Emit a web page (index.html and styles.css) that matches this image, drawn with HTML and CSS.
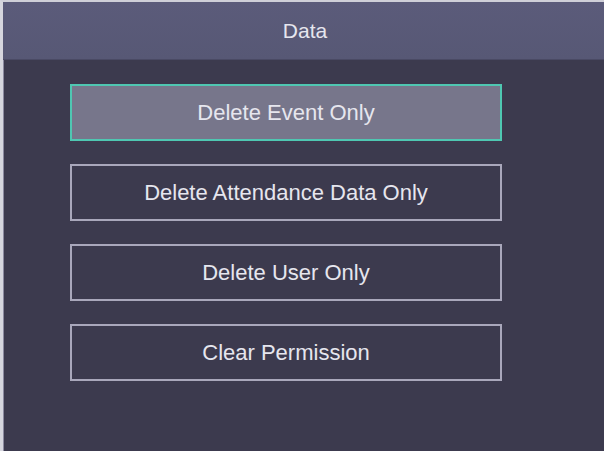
FILE: index.html
```html
<!DOCTYPE html>
<html lang="en">
<head>
<meta charset="utf-8">
<title>Data</title>
<link rel="stylesheet" href="styles.css">
</head>
<body>
  <div class="screen">
    <header class="title-bar">Data</header>
    <main class="menu">
      <button class="menu-item is-selected">Delete Event Only</button>
      <button class="menu-item">Delete Attendance Data Only</button>
      <button class="menu-item">Delete User Only</button>
      <button class="menu-item">Clear Permission</button>
    </main>
  </div>
</body>
</html>
```
FILE: styles.css
```css
html, body {
  margin: 0;
  padding: 0;
  height: 100%;
  background: #3c3a4e;
}

.screen {
  box-sizing: border-box;
  height: 451px;
  width: 604px;
  border-top: 2px solid #cfcfd8;
  border-left: 3px solid #d6d6de;
  box-shadow: inset 1px 0 0 #8c8aa0;
  background: #3c3a4e;
  font-family: "Liberation Sans", Arial, sans-serif;
  color: #e6e6ee;
  display: flex;
  flex-direction: column;
}

.title-bar {
  height: 57px;
  display: flex;
  align-items: center;
  justify-content: center;
  background: linear-gradient(#5b5b7a, #575875);
  border-bottom: 1px solid #4a4a64;
  font-size: 21px;
  padding-left: 3px;
}

.menu {
  display: flex;
  flex-direction: column;
  gap: 23px;
  padding: 24px 0 0 67px;
}

.menu-item {
  box-sizing: border-box;
  width: 432px;
  height: 57px;
  margin: 0;
  padding: 0;
  background: transparent;
  border: 2px solid #a9a7bb;
  color: #e6e6ee;
  font-family: inherit;
  font-size: 22px;
  text-align: center;
}

.menu-item.is-selected {
  background: #77768b;
  border-color: #4fc7b2;
}
```
